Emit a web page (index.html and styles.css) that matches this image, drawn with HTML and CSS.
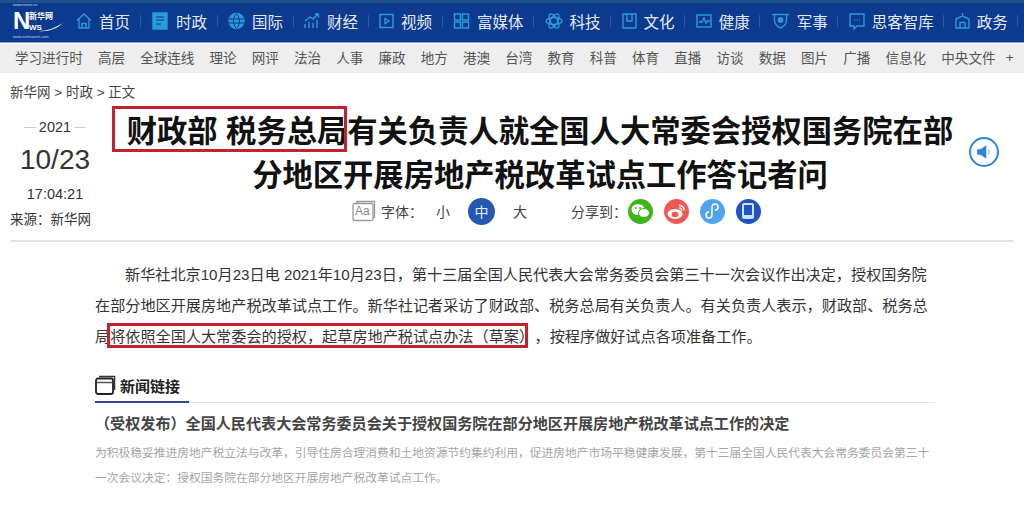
FILE: index.html
```html
<!DOCTYPE html>
<html lang="zh-CN">
<head>
  <meta charset="UTF-8" />
  <meta name="viewport" content="width=device-width, initial-scale=1" />
  <title>财政部 税务总局有关负责人答记者问</title>
  <link rel="stylesheet" href="styles.css">
</head>
<body>
  <header class="topnav">
    <div class="logo">
      <span class="logo-url">www.news.cn</span>
      <div class="logo-main">
        <span class="logo-n">N</span>
        <div class="logo-right">
          <span class="logo-cn">新华网</span>
          <span class="logo-ews">WS</span>
        </div>
        <svg class="logo-swoosh" width="24" height="10" viewBox="0 0 24 10"><path d="M0 9C8 9 16 6 24 1C18 7 8 10 0 9z" fill="#fff"/></svg>
      </div>
      <span class="logo-url">www.xinhuanet.com</span>
    </div>
    <nav class="nav-items">
      <a class="nav-item">
        <svg class="nav-icon" width="16" height="18" viewBox="0 0 16 18"><path d="M1 8.500L8 2l7 6.500M3 7v9h10V7M6 16v-4.500h4V16"/></svg>
        首页
      </a>
      <a class="nav-item">
        <svg class="nav-icon solid" width="18" height="18" viewBox="0 0 18 18"><path d="M2 1h14v16H2z"/><path class="cut" d="M5 5h8M5 8h8M5 12h5"/></svg>
        时政
      </a>
      <a class="nav-item">
        <svg class="nav-icon" width="17" height="18" viewBox="0 0 17 18"><circle class="fill" cx="8.500" cy="9" r="7.500"/><path class="cut" d="M1 7h15M1 11h15M8.500 1.500c-4 4-4 11 0 15M8.500 1.500c4 4 4 11 0 15"/></svg>
        国际
      </a>
      <a class="nav-item">
        <svg class="nav-icon" width="16" height="18" viewBox="0 0 16 18"><path d="M1 16v-4M5 16v-6M9 16v-5M13 16V8M1 9l5-4 3 2 5-5M11 2h3.500v3.500"/></svg>
        财经
      </a>
      <a class="nav-item">
        <svg class="nav-icon" width="15" height="18" viewBox="0 0 15 18"><path d="M1 2.500h13v13H1z"/><path d="M6 6.500l4 2.500-4 2.500z"/></svg>
        视频
      </a>
      <a class="nav-item">
        <svg class="nav-icon" width="17" height="18" viewBox="0 0 17 18"><path d="M1.500 2h6v6h-6zM9.500 2h6v6h-6zM1.500 10h6v6h-6zM9.500 10h6v6h-6z"/></svg>
        富媒体
      </a>
      <a class="nav-item">
        <svg class="nav-icon" width="18" height="18" viewBox="0 0 18 18"><ellipse cx="9" cy="9" rx="8" ry="3.500"/><ellipse cx="9" cy="9" rx="8" ry="3.500" transform="rotate(60 9 9)"/><ellipse cx="9" cy="9" rx="8" ry="3.500" transform="rotate(120 9 9)"/></svg>
        科技
      </a>
      <a class="nav-item">
        <svg class="nav-icon" width="15" height="18" viewBox="0 0 15 18"><path d="M1 2h13v14H1zM5 2v7h5V2"/></svg>
        文化
      </a>
      <a class="nav-item">
        <svg class="nav-icon" width="16" height="18" viewBox="0 0 16 18"><path d="M1 3h14v12H1zM3 10h3l2-4 2 5 1.500-2H14"/></svg>
        健康
      </a>
      <a class="nav-item">
        <svg class="nav-icon" width="19" height="18" viewBox="0 0 19 18"><path d="M1 2.500h17M3.500 2.500v6c0 4 3 6 6 7.500 3-1.500 6-3.500 6-7.500v-6"/><circle class="fill" cx="9.500" cy="8" r="2.200"/></svg>
        军事
      </a>
      <a class="nav-item">
        <svg class="nav-icon" width="16" height="18" viewBox="0 0 16 18"><path d="M1 2h14v12H8l-3 3v-3H1z"/><path d="M5 8h.8M7.600 8h.8M10.200 8h.8"/></svg>
        思客智库
      </a>
      <a class="nav-item">
        <svg class="nav-icon" width="15" height="18" viewBox="0 0 15 18"><path d="M7.500 1v3M1 16V7l6.500-3L14 7v9zM5 16v-5.500h5V16"/></svg>
        政务
      </a>
    </nav>
  </header>

  <div class="subnav">
    <a>学习进行时</a><a>高层</a><a>全球连线</a><a>理论</a><a>网评</a><a>法治</a><a>人事</a><a>廉政</a><a>地方</a><a>港澳</a><a>台湾</a><a>教育</a><a>科普</a><a>体育</a><a>直播</a><a>访谈</a><a>数据</a><a>图片</a><a>广播</a><a>信息化</a><a>中央文件</a><a class="more">+</a>
  </div>

  <div class="breadcrumb">新华网 &gt; 时政 &gt; 正文</div>

  <section class="article-head">
    <div class="date-col">
      <div class="year">2021</div>
      <div class="day">10/23</div>
      <div class="time">17:04:21</div>
      <div class="source">来源：新华网</div>
    </div>
    <div class="title-col">
      <h1><span class="mark mark-title">财政部 税务总局</span>有关负责人就全国人大常委会授权国务院在部<br>分地区开展房地产税改革试点工作答记者问</h1>
      <div class="tools">
        <svg class="aa-icon" width="24" height="22" viewBox="0 0 24 22"><path d="M5 3V1.500h17.500V17H21"/><rect x="1" y="3.500" width="20" height="17" rx="1.500"/></svg>
        <span class="aa-text">Aa</span>
        <span class="tool-label">字体：</span>
        <span class="size-opt">小</span>
        <span class="size-opt active">中</span>
        <span class="size-opt">大</span>
        <span class="tool-label share-label">分享到：</span>
        <span class="share wechat">
          <svg width="19" height="16" viewBox="0 0 19 16"><ellipse cx="7" cy="6.500" rx="6.500" ry="5.500" fill="#fff"/><ellipse cx="13" cy="10" rx="5.500" ry="4.500" fill="#fff" stroke="#3fb31a"/><circle cx="5" cy="5" r="1" fill="#3fb31a"/><circle cx="9" cy="5" r="1" fill="#3fb31a"/></svg>
        </span>
        <span class="share weibo">
          <svg width="19" height="17" viewBox="0 0 19 17"><ellipse cx="8" cy="11" rx="7.500" ry="5" fill="#fff"/><ellipse cx="8" cy="11.500" rx="3.500" ry="2.800" fill="#ee5a52"/><path d="M12 2.500c3-.5 5.500 2 5 5M12 5c1.500-.3 3 1 2.600 2.600" fill="none" stroke="#fff" stroke-width="1.400"/></svg>
        </span>
        <span class="share mini">
          <svg width="16" height="18" viewBox="0 0 16 18"><path d="M8 5.500C8 3.500 9.500 2 11.200 2S14 3.300 14 5s-1.300 3-3 3.200M8 5.500v7C8 14.500 6.500 16 4.800 16S2 14.700 2 13s1.300-3 3-3.200" fill="none" stroke="#fff" stroke-width="1.500"/></svg>
        </span>
        <span class="share phone">
          <svg width="14" height="18" viewBox="0 0 14 18"><rect x="1" y="1" width="12" height="16" rx="2" fill="#cfe0fa"/><rect x="3" y="3" width="8" height="10" fill="#2152c4"/></svg>
        </span>
      </div>
    </div>
    <div class="audio-col">
      <span class="audio-btn">
        <svg width="16" height="16" viewBox="0 0 14 14"><path d="M1 4.500h3L9 1v12L4 9.500H1z" fill="#2a85e0"/><path d="M11 5c.8 1 .8 3 0 4" fill="none" stroke="#9cc8f0" stroke-width="1.200"/></svg>
      </span>
    </div>
  </section>

  <main class="article-body">
    <p class="lead">新华社北京10月23日电 2021年10月23日，第十三届全国人民代表大会常务委员会第三十一次会议作出决定，授权国务院在部分地区开展房地产税改革试点工作。新华社记者采访了财政部、税务总局有关负责人。有关负责人表示，财政部、税务总局<span class="mark mark-body">将依照全国人大常委会的授权，起草房地产税试点办法（草案）</span>，按程序做好试点各项准备工作。</p>

    <div class="link-head">
      <div class="link-tab">
        <svg width="21" height="20" viewBox="0 0 21 20"><path d="M4 1.500h15.500V15" fill="none" stroke="#333" stroke-width="1.500"/><rect x="1" y="3.500" width="17" height="15.500" rx="2" fill="#fff" stroke="#222" stroke-width="1.800"/><path d="M2 7.500h15" stroke="#555" stroke-width="1.500"/></svg>
        <span>新闻链接</span>
      </div>
    </div>
    <h2 class="link-title">（受权发布）全国人民代表大会常务委员会关于授权国务院在部分地区开展房地产税改革试点工作的决定</h2>
    <p class="link-desc">为积极稳妥推进房地产税立法与改革，引导住房合理消费和土地资源节约集约利用，促进房地产市场平稳健康发展，第十三届全国人民代表大会常务委员会第三十一次会议决定：授权国务院在部分地区开展房地产税改革试点工作。</p>
  </main>
</body>
</html>
```

FILE: styles.css
```css
* {
  box-sizing: border-box;
}

html,
body {
  height: 506px;
  overflow: hidden;
}

body {
  margin: 0;
  background-color: #fff;
  color: #333;
  font-family: "Liberation Sans", "Noto Sans CJK SC", sans-serif;
}

h1,
h2,
p {
  margin: 0;
}

/* top bar */
.topnav {
  display: flex;
  align-items: center;
  height: 43px;
  background-color: #0b3a8f;
  border-top: 3px solid #21508f;
  border-bottom: 1px solid #7fa0cf;
  padding: 0 0 3px 13px;
  overflow: hidden;
}

.logo {
  width: 53px;
  flex-shrink: 0;
  color: #fff;
  font-weight: bold;
  display: flex;
  flex-direction: column;
}

.logo-url {
  font-size: 4px;
  line-height: 4px;
  font-weight: normal;
  color: #c9d6ea;
  white-space: nowrap;
}

.logo-main {
  display: flex;
  align-items: flex-start;
  position: relative;
  height: 28px;
}

.logo-n {
  font-size: 24px;
  line-height: 28px;
  width: 16px;
}

.logo-right {
  display: flex;
  flex-direction: column;
  padding-top: 2px;
}

.logo-cn {
  font-size: 8px;
  line-height: 15px;
  white-space: nowrap;
}

.logo-ews {
  font-size: 8px;
  line-height: 8px;
}

.logo-swoosh {
  position: absolute;
  left: 26px;
  bottom: 3px;
}

.nav-items {
  display: flex;
  flex-shrink: 0;
  margin-left: 10px;
}

.nav-item {
  display: flex;
  align-items: center;
  gap: 7px;
  padding: 0 10.500px 0 0;
  margin-right: 10.500px;
  height: 22px;
  font-size: 15.500px;
  color: #e4eaf5;
  white-space: nowrap;
  position: relative;
}

.nav-item::after {
  content: "";
  position: absolute;
  right: 0;
  top: 5px;
  height: 12px;
  width: 1px;
  background-color: #2c5aa3;
}

.nav-icon {
  fill: none;
  stroke: #2a9bd6;
  stroke-width: 1.400;
}

.nav-icon.solid,
.nav-icon .fill {
  fill: #2a9bd6;
}

.nav-icon .cut {
  stroke: #0b3a8f;
  stroke-width: 1;
  fill: none;
}

.subnav {
  display: flex;
  align-items: center;
  gap: 15.150px;
  height: 29px;
  margin-top: 1px;
  padding: 0 0 3px 15px;
  background-color: #eeeeee;
  color: #555;
  font-size: 13.550px;
  white-space: nowrap;
}

.subnav .more {
  margin-left: -5px;
}

.breadcrumb {
  margin-top: 10px;
  padding-left: 10px;
  height: 20px;
  line-height: 20px;
  font-size: 13.500px;
  color: #444;
}

/* title area */
.article-head {
  display: flex;
  margin: 0 10px;
  padding-top: 5px;
  height: 139px;
  border-bottom: 2px solid #e2e2e2;
}

.date-col {
  width: 100px;
  flex-shrink: 0;
}

.year,
.day,
.time {
  width: 90px;
  text-align: center;
}

.year {
  display: flex;
  align-items: center;
  justify-content: center;
  gap: 3px;
  margin-top: 10px;
  height: 18px;
  font-size: 14.500px;
}

.year::before,
.year::after {
  content: "";
  width: 12px;
  height: 1px;
  background-color: #ccc;
}

.day {
  margin-top: 7px;
  font-size: 28px;
  line-height: 34px;
  color: #333;
}

.time {
  margin-top: 8px;
  font-size: 14.500px;
  line-height: 18px;
}

.source {
  margin-top: 8px;
  font-size: 13.500px;
  line-height: 18px;
  white-space: nowrap;
}

.title-col {
  width: 860px;
  flex-shrink: 0;
}

h1 {
  font-size: 30.300px;
  line-height: 44px;
  font-weight: bold;
  color: #111;
  text-align: center;
  margin-top: 2px;
  white-space: nowrap;
}

.mark {
  position: relative;
  white-space: nowrap;
}

.mark::after {
  content: "";
  position: absolute;
  border: 3px solid #c4222c;
}

.mark-title::after {
  left: -15px;
  right: 0;
  top: -9px;
  bottom: -4px;
}

.mark-body {
  margin-right: 8px;
}

.mark-body::after {
  left: -3px;
  right: -1px;
  top: -5px;
  bottom: -3px;
}

.tools {
  display: flex;
  align-items: center;
  position: relative;
  margin-top: -3px;
  padding-left: 242px;
  height: 32px;
  font-size: 14px;
  color: #444;
}

.aa-icon {
  fill: #fff;
  stroke: #999;
  stroke-width: 1.300;
  flex-shrink: 0;
}

.aa-text {
  position: absolute;
  left: 245px;
  top: 9px;
  font-size: 12px;
  line-height: 14px;
  color: #888;
}

.tool-label {
  margin-left: 5px;
  width: 42px;
  white-space: nowrap;
}

.size-opt {
  display: flex;
  align-items: center;
  justify-content: center;
  width: 27px;
  height: 27px;
  margin-right: 11.500px;
  border-radius: 50%;
}

.tool-label + .size-opt {
  margin-left: 6.500px;
}

.size-opt.active {
  background-color: #2459b2;
  color: #e8eefa;
}

.share-label {
  margin-left: 26px;
  width: 56.500px;
}

.share {
  display: flex;
  align-items: center;
  justify-content: center;
  width: 25px;
  height: 25px;
  margin-right: 11px;
  border-radius: 50%;
}

.wechat {
  background-color: #3fb31a;
}

.weibo {
  background-color: #ee5a52;
}

.mini {
  background-color: #4ea4ef;
}

.phone {
  background-color: #2152c4;
}

.audio-col {
  display: flex;
  padding-top: 29px;
}

.audio-btn {
  display: flex;
  align-items: center;
  justify-content: center;
  width: 30px;
  height: 30px;
  margin-left: -1px;
  border: 2px solid #2a85e0;
  border-radius: 50%;
}

/* article */
.article-body {
  padding: 17px 89px 0 95px;
}

.lead {
  font-size: 15.150px;
  line-height: 31px;
  text-indent: 30px;
  color: #333;
}

.link-head {
  margin-top: 17px;
  border-bottom: 1px solid #e4e4e4;
  height: 34px;
}

.link-tab {
  display: inline-flex;
  align-items: center;
  gap: 4px;
  height: 34px;
  width: 94px;
  border-bottom: 2px solid #2f4795;
  font-size: 15px;
  font-weight: bold;
  color: #222;
  white-space: nowrap;
}

.link-title {
  margin-top: 10px;
  font-size: 15.100px;
  line-height: 22px;
  font-weight: bold;
  color: #444;
  white-space: nowrap;
}

.link-desc {
  margin-top: 5px;
  font-size: 11.750px;
  line-height: 25px;
  color: #a5a5a5;
}
```
